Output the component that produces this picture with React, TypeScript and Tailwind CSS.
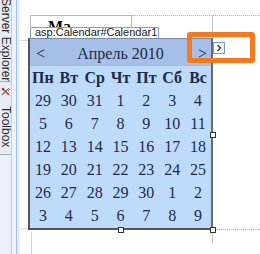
import React from "react";

const serif = { fontFamily: '"Liberation Serif", "Times New Roman", serif' };
const sans = { fontFamily: '"Liberation Sans", Arial, sans-serif' };

const days = ["Пн", "Вт", "Ср", "Чт", "Пт", "Сб", "Вс"];
const weeks = [
  [29, 30, 31, 1, 2, 3, 4],
  [5, 6, 7, 8, 9, 10, 11],
  [12, 13, 14, 15, 16, 17, 18],
  [19, 20, 21, 22, 23, 24, 25],
  [26, 27, 28, 29, 30, 1, 2],
  [3, 4, 5, 6, 7, 8, 9],
];

function Sidebar() {
  return (
    <div className="flex h-full shrink-0">
      <div className="flex w-[11px] flex-col bg-[#edf0fa]">
        <div className="flex h-[82px] flex-col overflow-hidden border-b border-[#a3aec2] bg-[#e7ebf4]">
          <span
            className="mt-[-2px] whitespace-nowrap text-[12px] leading-[11px] text-[#2b2b2b] [writing-mode:vertical-rl]"
            style={sans}
          >
            Server Explorer
          </span>
        </div>
        <div className="flex h-[73px] flex-col items-center overflow-hidden border-b border-[#a3aec2] bg-[#e7ebf4]">
          <svg width="10" height="10" viewBox="0 0 10 10" className="mt-[5px] shrink-0">
            <path d="M1 8 L6 3" stroke="#8a8a8a" strokeWidth="1.6" />
            <path d="M6 3 L8 1 M7 4 L9 2" stroke="#6a6a6a" strokeWidth="1" />
            <path d="M2 2 L8 8" stroke="#d23a3a" strokeWidth="1.6" />
            <circle cx="2" cy="2" r="1.2" fill="#c02828" />
          </svg>
          <span
            className="mt-[9px] whitespace-nowrap text-[12px] leading-[11px] text-[#2b2b2b] [writing-mode:vertical-rl]"
            style={sans}
          >
            Toolbox
          </span>
        </div>
      </div>
      <div className="w-[1px] bg-[#c7cfdc]" />
      <div className="w-[4px] bg-[#eef2fa]" />
      <div className="w-[1px] bg-[#a9c3e4]" />
      <div className="w-[2px] bg-[#dbe7f5]" />
      <div className="w-[1px] bg-white" />
    </div>
  );
}

function Calendar() {
  return (
    <div
      className="ml-[8px] w-[185px] border-b-2 border-l-2 border-r-2 border-t border-b-[#555] border-l-[#555] border-r-[#6b6b6b] border-t-[#7b8aa6] bg-[#bfdbfc] pb-[1px] text-[#1d2a4b]"
      style={serif}
    >
      <div className="grid h-[27px] grid-cols-[30px_1fr_30px] items-center bg-[#a5bfe6] text-[16px]">
        <span className="pl-[6px] pt-[2px]">&lt;</span>
        <span className="pt-[2px] text-center">Апрель 2010</span>
        <span className="pr-[4px] pt-[2px] text-right">&gt;</span>
      </div>
      <div className="grid grid-cols-7">
        {days.map((d) => (
          <div key={d} className="flex h-[23px] items-center justify-center text-[16px] font-bold">
            {d}
          </div>
        ))}
        {weeks.flat().map((n, i) => (
          <div key={i} className="flex h-[23px] items-center justify-center text-[16px]">
            {n}
          </div>
        ))}
      </div>
    </div>
  );
}

function Handle({ className }: { className: string }) {
  return <div className={`absolute h-[6px] w-[6px] border border-[#333] bg-white ${className}`} />;
}

export default function App() {
  return (
    <div className="relative flex h-[254px] w-[260px] overflow-hidden bg-white">
      <Sidebar />
      <div className="flex flex-1 flex-col">
        <div className="ml-[10px] mt-[15px] h-[12px] w-[102px] overflow-hidden border-l border-r border-t border-[#b9b9b9]">
          <span className="ml-[17px] mt-[3px] block text-[16px] font-bold leading-[16px] text-black" style={serif}>
            Ма
          </span>
        </div>
        <div className="relative z-10 ml-[10px] h-[11px] w-[129px] rounded-t-[2px] border border-b-0 border-[#7f9fd0] bg-white">
          <span className="absolute left-[4px] top-[-2px] whitespace-nowrap text-[11px] leading-[13px] text-[#1a1a1a]" style={sans}>
            asp:Calendar#Calendar1
          </span>
        </div>
        <Calendar />
      </div>

      {/* design surface guides */}
      <div className="absolute left-[132px] top-[15px] w-[128px] border-t border-dotted border-[#b5b5b5]" />
      <div className="absolute left-[212px] top-[15px] h-[23px] border-l border-[#c4c4c4]" />
      <div className="absolute left-[216px] top-[229px] w-[44px] border-t border-dotted border-[#b5b5b5]" />
      <div className="absolute left-[212px] top-[233px] h-[10px] border-l border-[#c4c4c4]" />
      <div className="absolute left-[20px] top-[228px] w-[8px] border-t border-[#e6cfd6]" />
      <div className="absolute left-[31px] top-[232px] h-[22px] border-l border-[#e6cfd6]" />
      <div className="absolute left-[20px] top-[40px] w-[8px] border-t border-[#d6d6d6]" />

      {/* selection handles */}
      <Handle className="left-[210px] top-[132px]" />
      <Handle className="left-[118px] top-[227px]" />
      <Handle className="left-[210px] top-[227px]" />

      {/* smart tag */}
      <div className="absolute left-[213px] top-[42px] flex h-[12px] w-[12px] items-center justify-center border border-[#7a9bd0] bg-white">
        <svg width="6" height="8" viewBox="0 0 6 8">
          <path d="M1.5 1 L4.5 4 L1.5 7" fill="none" stroke="#333" strokeWidth="1.4" />
        </svg>
      </div>

      {/* highlight */}
      <div className="absolute left-[187px] top-[32px] h-[31px] w-[68px] rounded-[3px] border-[5px] border-[#f47a20]" />
    </div>
  );
}
